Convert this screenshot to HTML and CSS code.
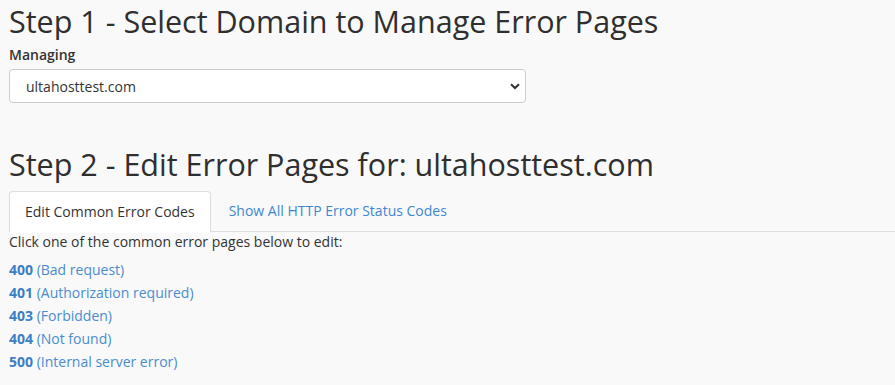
FILE: index.html
```html
<!DOCTYPE html>
<html>
<head>
<meta charset="utf-8">
<link rel="stylesheet" href="styles.css">
</head>
<body>
<div class="page">
  <h1 class="title">Step 1 - Select Domain to Manage Error Pages</h1>
  <label class="label">Managing</label>
  <div class="select">
    <span>ultahosttest.com</span>
    <svg class="caret" width="10" height="7" viewBox="0 0 10 7"><path d="M1 1.2 L5 5 L9 1.2" fill="none" stroke="#333" stroke-width="2"/></svg>
  </div>
  <h1 class="title title2">Step 2 - Edit Error Pages for: ultahosttest.com</h1>
  <div class="tabs">
    <div class="tab active">Edit Common Error Codes</div>
    <div class="tab link">Show All HTTP Error Status Codes</div>
  </div>
  <p class="intro">Click one of the common error pages below to edit:</p>
  <ul class="codes">
    <li><a><b>400</b> (Bad request)</a></li>
    <li><a><b>401</b> (Authorization required)</a></li>
    <li><a><b>403</b> (Forbidden)</a></li>
    <li><a><b>404</b> (Not found)</a></li>
    <li><a><b>500</b> (Internal server error)</a></li>
  </ul>
</div>
</body>
</html>
```
FILE: styles.css
```css
html, body { margin: 0; padding: 0; background: #f9f9f9; }
body { font-family: "Open Sans", sans-serif; color: #333; font-size: 14px; }
.page { padding: 0 9px; }
.title { font-size: 30.5px; font-weight: 400; margin: 0; line-height: 42px; color: #2f2f2f; }
.label { display: block; font-weight: 600; font-size: 14px; line-height: 20px; margin-top: 3px; margin-bottom: 4px; }
.select { height: 32px; border: 1px solid #ccc; border-radius: 4px; background: #fff; display: flex; align-items: center; justify-content: space-between; padding: 0 0 0 16px; width: 499px; }
.select span { font-size: 14px; color: #333; }
.caret { margin-right: 5px; }
.title2 { margin-top: 40px; }
.tabs { display: flex; border-bottom: 1px solid #ddd; margin: 6px -9px 0 0; height: 40px; }
.tab { padding: 0 15px; line-height: 40px; font-size: 14px; }
.tab.active { background: #fff; border: 1px solid #ddd; border-bottom-color: #fff; border-radius: 4px 4px 0 0; height: 40px; margin-bottom: -1px; }
.tab.link { color: #3f88d0; padding-left: 18px; }
.intro { margin: 0; font-size: 14px; line-height: 20px; }
.codes { list-style: none; margin: 6px 0 0; padding: 0; }
.codes li { line-height: 23px; font-size: 14px; }
.codes a { color: #4a8cd0; }
.codes b { font-weight: 700; color: #3d7fc4; }
```
